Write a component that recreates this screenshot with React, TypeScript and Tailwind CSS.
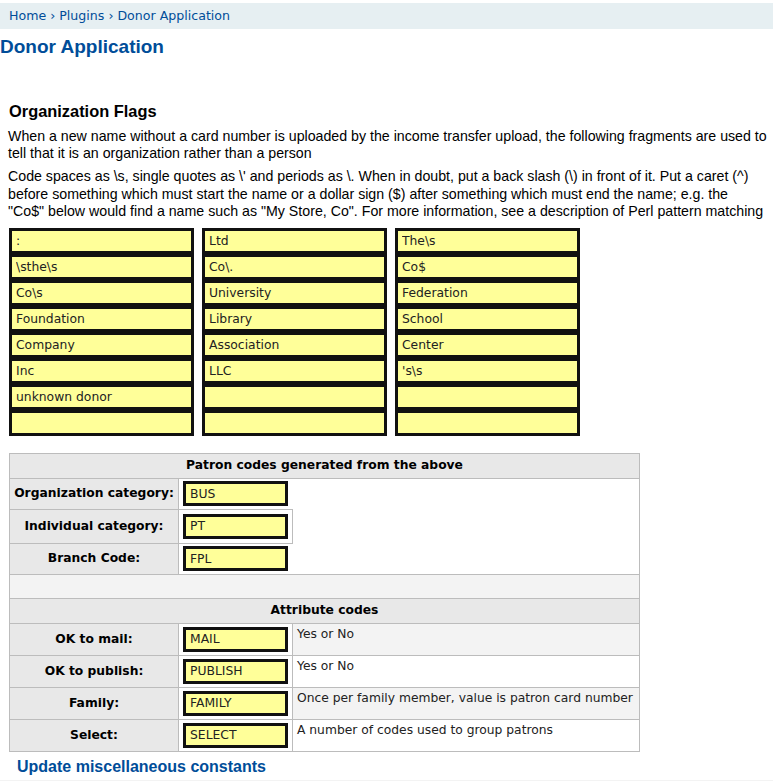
import React from "react";

const flagColumns = [
  [":", "\\sthe\\s", "Co\\s", "Foundation", "Company", "Inc", "unknown donor", ""],
  ["Ltd", "Co\\.", "University", "Library", "Association", "LLC", "", ""],
  ["The\\s", "Co$", "Federation", "School", "Center", "'s\\s", "", ""],
];

const attributes = [
  { label: "OK to mail:", value: "MAIL", note: "Yes or No" },
  { label: "OK to publish:", value: "PUBLISH", note: "Yes or No" },
  { label: "Family:", value: "FAMILY", note: "Once per family member, value is patron card number" },
  { label: "Select:", value: "SELECT", note: "A number of codes used to group patrons" },
];

function CodeInput({ value }: { value: string }) {
  return (
    <input
      readOnly
      value={value}
      className="block w-[105px] h-[25px] border-[3px] border-[#111] bg-[#ffff99] px-[4px] text-[12.35px] text-[#222] font-['DejaVu_Sans',sans-serif] outline-none"
    />
  );
}

export default function App() {
  const th =
    "border border-[#bcbcbc] bg-[#e8e8e8] px-[3px] text-center font-bold whitespace-nowrap text-black w-[169px]";
  return (
    <div className="min-h-screen bg-white font-['Liberation_Sans',Arial,sans-serif] text-black">
      {/* Breadcrumbs */}
      <div className="mt-[3px] h-[26px] bg-[#e6eff2] px-[9px] leading-[26px] text-[12.6px] font-['DejaVu_Sans',sans-serif] text-[#004d99]">
        <a>Home</a> › <a>Plugins</a> › <a>Donor Application</a>
      </div>

      <h1 className="mt-[7px] text-[19px] font-bold leading-[22px] text-[#004d99]">Donor Application</h1>

      <div className="pl-[9px]">
        <h2 className="mt-[44px] text-[16.4px] font-bold leading-[19px]">Organization Flags</h2>
        <p className="mt-[7px] -ml-[1px] text-[14.2px] leading-[17px]">
          When a new name without a card number is uploaded by the income transfer upload, the following fragments are used to
          tell that it is an organization rather than a person
        </p>
        <p className="mt-[6px] -ml-[1px] text-[14.2px] leading-[17.5px]">
          Code spaces as \s, single quotes as \' and periods as \. When in doubt, put a back slash (\) in front of it. Put a
          caret (^) before something which must start the name or a dollar sign ($) after something which must end the name;
          e.g. the
          <br />
          "Co$" below would find a name such as "My Store, Co". For more information, see a description of Perl pattern
          matching
        </p>

        {/* Flag inputs */}
        <div className="mt-[7px] flex gap-[8px]">
          {flagColumns.map((col, i) => (
            <div key={i} className="flex flex-col">
              {col.map((v, j) => (
                <input
                  key={j}
                  readOnly
                  value={v}
                  className="block w-[185px] h-[26px] border-[3px] border-[#111] bg-[#ffff99] px-[4px] text-[12.35px] text-[#222] font-['DejaVu_Sans',sans-serif] outline-none"
                />
              ))}
            </div>
          ))}
        </div>

        {/* Codes table */}
        <table className="mt-[17px] w-[631px] border-collapse border border-[#bcbcbc] font-['DejaVu_Sans',sans-serif] text-[12.3px]">
          <tbody>
            <tr className="h-[25px]">
              <th colSpan={3} className="border border-[#bcbcbc] bg-[#e8e8e8] text-center font-bold">
                Patron codes generated from the above
              </th>
            </tr>
            <tr className="h-[31px]">
              <th className={th}>Organization category:</th>
              <td colSpan={2} className="border-l border-[#bcbcbc] px-[4px] py-[2px]">
                <CodeInput value="BUS" />
              </td>
            </tr>
            <tr className="h-[34px]">
              <th className={th}>Individual category:</th>
              <td className="w-[114px] border border-[#bcbcbc] px-[4px] py-[3px]">
                <CodeInput value="PT" />
              </td>
            </tr>
            <tr className="h-[31px]">
              <th className={th}>Branch Code:</th>
              <td colSpan={2} className="border-l border-b border-[#bcbcbc] px-[4px] py-[2px]">
                <CodeInput value="FPL" />
              </td>
            </tr>
            <tr className="h-[24px]">
              <td colSpan={3} className="border border-[#bcbcbc] bg-[#f3f3f3]"></td>
            </tr>
            <tr className="h-[25px]">
              <th colSpan={3} className="border border-[#bcbcbc] bg-[#e8e8e8] text-center font-bold">
                Attribute codes
              </th>
            </tr>
            {attributes.map((a, i) => (
              <tr key={a.value} className="h-[32px]">
                <th className={th}>{a.label}</th>
                <td className="w-[114px] border border-[#bcbcbc] bg-white px-[4px] py-[3px]">
                  <CodeInput value={a.value} />
                </td>
                <td
                  className={
                    "border border-[#bcbcbc] px-[4px] pt-[1px] align-top text-[#222] " +
                    (i % 2 === 0 ? "bg-[#f3f3f3]" : "bg-white")
                  }
                >
                  {a.note}
                </td>
              </tr>
            ))}
          </tbody>
        </table>

        <div className="mt-[5px] pl-[8px] text-[16px] font-bold leading-[19px] text-[#004d99]">
          Update miscellaneous constants
        </div>
      </div>

      <div className="mt-[4px] h-[40px] bg-[#f3f3f3]"></div>
    </div>
  );
}
